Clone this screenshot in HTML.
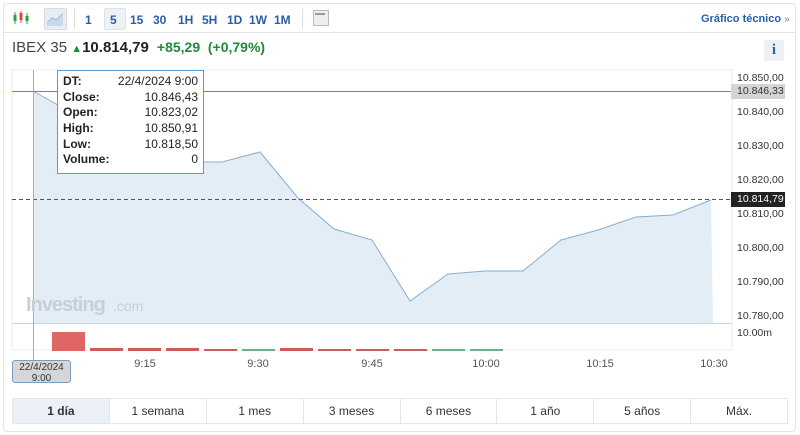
<!DOCTYPE html>
<html><head><meta charset="utf-8"><style>
body{margin:0;width:800px;height:435px;background:#fff;font-family:"Liberation Sans",Arial,sans-serif;position:relative;overflow:hidden}
.card{position:absolute;left:3px;top:3px;width:791px;height:427px;border:1px solid #e3e3e3;border-radius:4px}
.tb{position:absolute;top:0;left:0;right:0;height:28px;border-bottom:1px solid #e3e3e3}
.tf{position:absolute;top:9px;font-size:12px;font-weight:bold;color:#2a5ea8;white-space:nowrap}
.abs{position:absolute}
.tabs{position:absolute;left:12px;top:398px;width:774px;height:24px;display:flex;border:1px solid #e6e6e6}
.tabs div{flex:1;text-align:center;line-height:24px;font-size:12px;color:#333;border-left:1px solid #e6e6e6}
.tabs div:first-child{border-left:none;background:#eaf0f6}
.tt{position:absolute;left:57px;top:70px;width:147px;height:104px;border:1px solid #5b9bd5;background:#fff;font-size:12px;color:#222;box-sizing:border-box;padding:3px 5px}
.tt div{display:flex;justify-content:space-between;height:15.7px}
.yl{position:absolute;left:737px;font-size:10.5px;color:#333;white-space:nowrap}
.xl{position:absolute;top:358px;font-size:11px;color:#555;transform:translateX(-50%)}
</style></head><body>
<div class="card">
<div class="tb">
 <svg class="abs" style="left:8px;top:6px" width="18" height="16"><g stroke-width="1"><line x1="3" y1="2" x2="3" y2="14" stroke="#2a9d4a"/><rect x="1.5" y="5" width="3" height="6" fill="#2a9d4a"/><line x1="9" y1="1" x2="9" y2="13" stroke="#d84a3a"/><rect x="7.5" y="3" width="3" height="7" fill="#d84a3a"/><line x1="15" y1="3" x2="15" y2="14" stroke="#2a9d4a"/><rect x="13.5" y="6" width="3" height="5" fill="#2a9d4a"/></g></svg>
 <div class="abs" style="left:40px;top:4px;width:21px;height:20px;background:#e8edf3;border:1px solid #d5dbe3;border-radius:2px"></div>
 <svg class="abs" style="left:43px;top:8px" width="17" height="14"><polyline points="0,11 5,6 9,8 16,2" fill="none" stroke="#7a9cc6"/><polygon points="0,11 5,6 9,8 16,2 16,14 0,14" fill="#c9d8ea"/></svg>
 <div class="abs" style="left:70px;top:5px;width:1px;height:20px;background:#ddd"></div>
 <div class="abs" style="left:100px;top:4px;width:20px;height:20px;background:#eef2f6;border:1px solid #dde3ea;border-radius:2px"></div>
 <span class="tf" style="left:81px">1</span><span class="tf" style="left:106px">5</span><span class="tf" style="left:126px">15</span><span class="tf" style="left:149px">30</span><span class="tf" style="left:174px">1H</span><span class="tf" style="left:198px">5H</span><span class="tf" style="left:223px">1D</span><span class="tf" style="left:245px">1W</span><span class="tf" style="left:270px">1M</span>
 <div class="abs" style="left:298px;top:5px;width:1px;height:20px;background:#ddd"></div>
 <div class="abs" style="left:309px;top:6px;width:14px;height:14px;background:#eee;border:1px solid #bbb"></div>
 <div class="abs" style="left:311px;top:9px;width:10px;height:2px;background:#999"></div>
 <span class="tf" style="left:697px;font-size:11px">Gráfico técnico <span style="font-weight:normal;font-size:10px;color:#5b86c0">»</span></span>
</div>
</div>
<div class="abs" style="left:12px;top:39px;font-size:15px;color:#444;white-space:nowrap">IBEX 35 <span style="color:#1e8a3c;font-size:11px">&#9650;</span><b style="color:#222">10.814,79</b> <b style="color:#1e8a3c;font-size:14px">&nbsp;+85,29 &nbsp;(+0,79%)</b></div>
<div class="abs" style="left:764px;top:40px;width:20px;height:21px;background:#eef1f4;color:#2a5ea8;font:bold 15px 'Liberation Serif',serif;text-align:center;line-height:21px">i</div>
<svg class="abs" style="left:0;top:0" width="800" height="435">
 <rect x="12" y="70" width="720" height="280" fill="none" stroke="#ececec"/>
 <polygon points="33,91 56,104 93,130 131,150 169,162 205,162 222,162 260,152 298,198 334,229 372,240 410,301 448,274 485,271 523,271 561,240 598,230 636,217 673,215 711,200 713,323 33,323" fill="#e3edf5"/>
 <polyline points="33,91 56,104 93,130 131,150 169,162 205,162 222,162 260,152 298,198 334,229 372,240 410,301 448,274 485,271 523,271 561,240 598,230 636,217 673,215 711,200" fill="none" stroke="#86aed3" stroke-width="1"/>
 <line x1="12" y1="323.5" x2="732" y2="323.5" stroke="#c9d4de"/>
 <line x1="12" y1="91.5" x2="735" y2="91.5" stroke="#4a8fcf"/>
 <line x1="12" y1="199.5" x2="735" y2="199.5" stroke="#555" stroke-dasharray="4,3"/>
 <line x1="33.5" y1="70" x2="33.5" y2="360" stroke="#8fb1d3"/>
 <rect x="52" y="332" width="33" height="19" fill="#e06666"/>
 <g fill="#d05a5a"><rect x="90" y="348" width="33" height="3"/><rect x="128" y="348" width="33" height="3"/><rect x="166" y="348" width="33" height="3"/><rect x="204" y="349" width="33" height="2"/><rect x="280" y="348" width="33" height="3"/><rect x="318" y="349" width="33" height="2"/><rect x="356" y="349" width="33" height="2"/><rect x="394" y="349" width="33" height="2"/></g>
 <g fill="#6fb08a"><rect x="242" y="349" width="33" height="2"/><rect x="432" y="349" width="33" height="2"/><rect x="470" y="349" width="33" height="2"/></g>
 <text x="26" y="311" font-family="Liberation Sans" font-size="20" font-weight="bold" fill="#c8cfd6" letter-spacing="-1">Investing</text><text x="113" y="311" font-family="Liberation Sans" font-size="14" fill="#c8cfd6">.com</text>
</svg>
<div class="abs" style="left:731px;top:84px;width:54px;height:15px;background:#d4d4d4"></div>
<div class="abs" style="left:731px;top:192px;width:54px;height:15px;background:#222"></div>
<div class="yl" style="top:72px">10.850,00</div>
<div class="yl" style="top:85px">10.846,33</div>
<div class="yl" style="top:106px">10.840,00</div>
<div class="yl" style="top:140px">10.830,00</div>
<div class="yl" style="top:174px">10.820,00</div>
<div class="yl" style="top:193px;color:#fff">10.814,79</div>
<div class="yl" style="top:208px">10.810,00</div>
<div class="yl" style="top:242px">10.800,00</div>
<div class="yl" style="top:276px">10.790,00</div>
<div class="yl" style="top:310px">10.780,00</div>
<div class="yl" style="top:327px">10.00m</div>
<div class="xl" style="left:145px">9:15</div><div class="xl" style="left:258px">9:30</div><div class="xl" style="left:372px">9:45</div><div class="xl" style="left:486px">10:00</div><div class="xl" style="left:600px">10:15</div><div class="xl" style="left:714px">10:30</div>
<div class="abs" style="left:12px;top:360px;width:59px;height:23px;background:#d6d6d6;border:1px solid #7a9cc0;border-radius:3px;font-size:10px;color:#333;text-align:center;line-height:11px;padding-top:1px;box-sizing:border-box">22/4/2024<br>9:00</div>
<div class="tt">
<div><b>DT:</b><span>22/4/2024 9:00</span></div>
<div><b>Close:</b><span>10.846,43</span></div>
<div><b>Open:</b><span>10.823,02</span></div>
<div><b>High:</b><span>10.850,91</span></div>
<div><b>Low:</b><span>10.818,50</span></div>
<div><b>Volume:</b><span>0</span></div>
</div>
<div class="tabs"><div style="font-weight:bold">1 día</div><div>1 semana</div><div>1 mes</div><div>3 meses</div><div>6 meses</div><div>1 año</div><div>5 años</div><div>Máx.</div></div>
</body></html>
